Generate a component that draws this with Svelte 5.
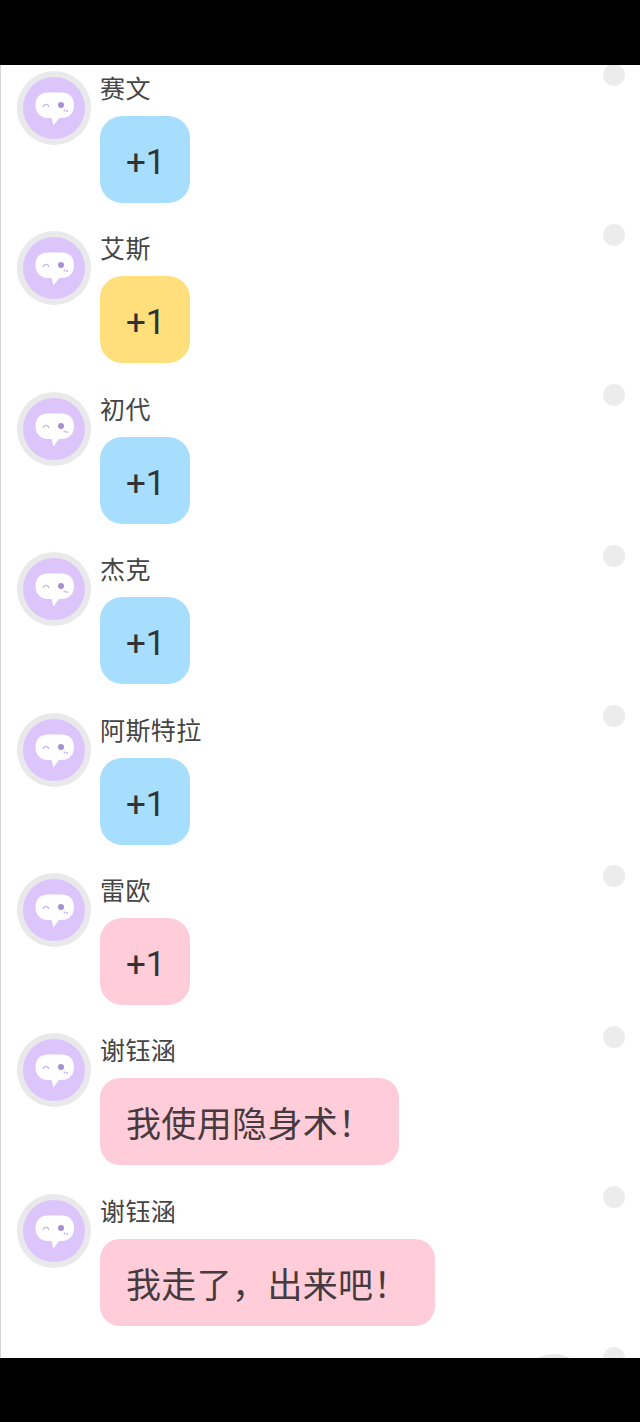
<script>
  const messages = [
    { name: '赛文', text: '+1', tone: 'blue' },
    { name: '艾斯', text: '+1', tone: 'yellow' },
    { name: '初代', text: '+1', tone: 'blue' },
    { name: '杰克', text: '+1', tone: 'blue' },
    { name: '阿斯特拉', text: '+1', tone: 'blue' },
    { name: '雷欧', text: '+1', tone: 'pink' },
    { name: '谢钰涵', text: '我使用隐身术！', tone: 'pink' },
    { name: '谢钰涵', text: '我走了，出来吧！', tone: 'pink' },
  ];
</script>

{#snippet avatar()}
  <svg class="avatar" viewBox="0 0 74 74" aria-hidden="true">
    <circle cx="37" cy="37" r="37" fill="#e9e8ea" />
    <circle cx="37" cy="37" r="31" fill="#dcc5fb" />
    <path
      d="M31 21.500h14c7.500 0 12 5 12 12.500s-4.500 13-12 13h-3l-5.500 7.500-2-7.500h-3.500c-8 0-12.500-5.500-12.500-13s4.500-12.500 12.500-12.500z"
      fill="#fff"
    />
    <path d="M26 36c1-3.500 5-3.500 6 0" fill="none" stroke="#c9bbdd" stroke-width="1.300" />
    <circle cx="44" cy="34" r="3" fill="#a88fd0" />
    <circle cx="47.500" cy="39.500" r="0.900" fill="#c4aee4" />
    <circle cx="50" cy="40" r="0.900" fill="#c4aee4" />
  </svg>
{/snippet}

<div class="screen">
  <div class="bar top"></div>
  <main class="list">
    {#each messages as m}
      <section class="row">
        {@render avatar()}
        <div class="body">
          <div class="name">{m.name}</div>
          <div class="bubble {m.tone}" class:long={m.text !== '+1'}>{m.text}</div>
        </div>
        <span class="dot"></span>
      </section>
    {/each}
    <section class="row mine">
      <div class="body"></div>
      {@render avatar()}
      <span class="dot"></span>
    </section>
  </main>
  <div class="bar bottom"></div>
</div>

<style>
  :global(body) {
    margin: 0;
    background: #000;
    font-family: 'Noto Sans CJK SC', 'Noto Sans', sans-serif;
  }

  .screen {
    display: flex;
    flex-direction: column;
    width: 640px;
    height: 1422px;
  }

  .bar {
    background: #000;
    flex: none;
  }

  .top {
    height: 65px;
  }

  .bottom {
    height: 64px;
  }

  .list {
    flex: 1;
    min-height: 0;
    overflow: hidden;
    background: #fff;
    border-left: 1px solid #d4d4d4;
  }

  .row {
    display: flex;
    align-items: flex-start;
    height: 160.4px;
    padding-right: 15px;
    box-sizing: border-box;
  }

  .avatar {
    flex: none;
    width: 74px;
    height: 74px;
    margin: 6px 0 0 16px;
  }

  .body {
    flex: 1;
    min-width: 0;
    margin-left: 9px;
    padding-top: 5px;
  }

  .name {
    height: 35px;
    margin-bottom: 11px;
    font-size: 25px;
    line-height: 35px;
    letter-spacing: 0.4px;
    color: #454545;
  }

  .bubble {
    display: inline-block;
    vertical-align: top;
    height: 87px;
    padding: 0 24px 0 26px;
    box-sizing: border-box;
    border-radius: 22px;
    font-family: Roboto, 'Noto Sans CJK SC', sans-serif;
    font-size: 35px;
    line-height: 93px;
    color: #303438;
  }

  .long {
    padding: 0 26px;
    border-radius: 20px;
    font-family: 'Noto Sans CJK SC', sans-serif;
    letter-spacing: 0.35px;
    line-height: 87px;
    color: #463a3e;
  }

  .blue {
    background: #a8defd;
  }

  .yellow {
    background: #ffdf7b;
  }

  .pink {
    background: #ffcdd9;
  }

  .dot {
    flex: none;
    width: 22px;
    height: 22px;
    margin-top: -1.5px;
    border-radius: 50%;
    background: #ececec;
  }

  .mine .avatar {
    margin: 6px 12px 0 0;
  }
</style>
